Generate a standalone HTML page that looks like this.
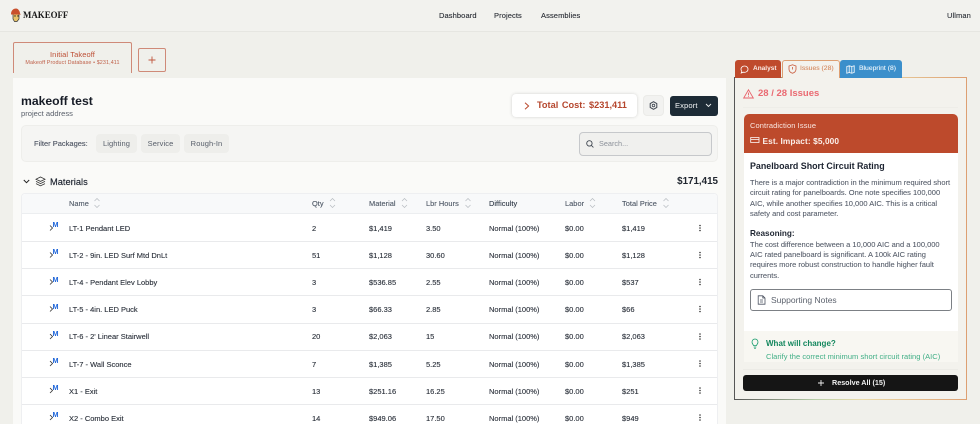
<!DOCTYPE html>
<html><head><meta charset="utf-8"><style>
*{box-sizing:border-box;margin:0;padding:0}
html,body{width:980px;height:424px;overflow:hidden}
body{background:#f0f0eb;font-family:"Liberation Sans",sans-serif;position:relative;color:#111827}
.a{position:absolute;white-space:nowrap}
.t{position:absolute;white-space:nowrap;line-height:10px;font-size:7.5px;color:#2a303a;-webkit-text-stroke:.12px #2a303a}
.h{position:absolute;white-space:nowrap;line-height:10px;font-size:7.4px;color:#4b5563;letter-spacing:.04px;top:199px;-webkit-text-stroke:.1px #4b5563}
.line{position:absolute;left:22px;width:695px;height:1px;background:#e9eaec}
.m{position:absolute;left:52.500px;font-size:7.200px;line-height:8px;font-weight:bold;color:#1d64d8}
svg{position:absolute;overflow:visible}
.p{position:absolute;left:750px;white-space:nowrap;font-size:7.5px;line-height:10px;color:#555c69;-webkit-text-stroke:.08px #555c69}
.n{position:absolute;top:11px;font-size:7.500px;line-height:10px;color:#2b2f36;letter-spacing:.1px;-webkit-text-stroke:.12px #2b2f36}
.c{position:absolute;top:134px;height:19px;background:#eeeeeb;border-radius:4px;text-align:center;font-size:7.500px;line-height:20px;color:#565d69;letter-spacing:.1px}
</style></head><body>
<!-- header -->
<div class="a" style="left:0;top:0;width:980px;height:32px;background:#f2f2ee;border-bottom:1px solid #e6e6e1"></div>
<svg style="left:10px;top:8px" width="12" height="14" viewBox="0 0 12 14"><path d="M3 6h6v5l-2 2.500H4.500L3 11z" fill="#e9c46a" stroke="#333" stroke-width=".7"/><path d="M1 6c0-4 3-5.500 5-5.500S10 3 10 5.500L11 6.500H1z" fill="#c9502c"/><circle cx="5" cy="8" r=".7" fill="#222"/><circle cx="8" cy="8" r=".7" fill="#222"/></svg>
<div class="a" style="left:23px;top:9px;font:bold 8.900px/12px 'Liberation Serif',serif;color:#1a1a1a">MAKEOFF</div>
<div class="n" style="left:439px">Dashboard</div>
<div class="n" style="left:494px">Projects</div>
<div class="n" style="left:541px">Assemblies</div>
<div class="n" style="left:947px">Ullman</div>
<!-- scenario tabs -->
<div class="a" style="left:13px;top:42px;width:119px;height:31px;border:1px solid #cf8a78;border-bottom:0;border-radius:2px 2px 0 0"></div>
<div class="a" style="left:13px;top:50px;width:119px;text-align:center;font-size:7.500px;line-height:10px;color:#bd4f35;letter-spacing:.1px">Initial Takeoff</div>
<div class="a" style="left:13px;top:59px;width:119px;text-align:center;font-size:5.400px;line-height:9px;color:#bf5f48;letter-spacing:.1px">Makeoff Product Database • $231,411</div>
<div class="a" style="left:138px;top:48px;width:28px;height:24px;border:1px solid #cf8a78;border-radius:2px"></div>
<svg style="left:148px;top:56px" width="8" height="8" viewBox="0 0 8 8"><path d="M4 .5v7M.5 4h7" stroke="#c0563d" stroke-width=".9"/></svg>
<!-- main panel -->
<div class="a" style="left:13px;top:78px;width:713px;height:346px;background:#fafaf8"></div>
<div class="a" style="left:21px;top:94px;font-size:12.200px;line-height:15px;font-weight:bold;color:#161b26">makeoff test</div>
<div class="a" style="left:21px;top:109px;font-size:7.600px;line-height:10px;color:#5a606b">project address</div>
<!-- actions -->
<div class="a" style="left:512px;top:94px;width:125px;height:23px;background:#fff;border-radius:4px;box-shadow:0 0 3px rgba(0,0,0,.16)"></div>
<svg style="left:524px;top:102px" width="6" height="8" viewBox="0 0 6 8"><path d="M1 .8 4.600 4 1 7.200" fill="none" stroke="#b9472c" stroke-width="1"/></svg>
<div class="a" style="left:537px;top:100px;font-size:9.200px;line-height:11px;font-weight:bold;color:#b5462d;word-spacing:1.100px">Total Cost: $231,411</div>
<div class="a" style="left:643px;top:95px;width:21px;height:21px;background:#f2f2f0;border:1px solid #ebebe8;border-radius:4px"></div>
<svg style="left:649px;top:101px" width="9" height="9" viewBox="0 0 9 9"><path d="M4.500.7 7.800 2.600V6.400L4.500 8.300 1.200 6.400V2.600Z" fill="none" stroke="#3f4650" stroke-width="1"/><circle cx="4.500" cy="4.500" r="1.300" fill="none" stroke="#3f4650" stroke-width=".8"/></svg>
<div class="a" style="left:670px;top:96px;width:48px;height:20px;background:#1d2b36;border-radius:3px"></div>
<div class="a" style="left:675px;top:101px;font-size:7.600px;line-height:10px;color:#f2f4f5;letter-spacing:.1px">Export</div>
<svg style="left:705px;top:103px" width="7" height="5" viewBox="0 0 7 5"><path d="M1 1 3.500 3.500 6 1" fill="none" stroke="#eef0f1" stroke-width=".9"/></svg>
<!-- filter bar -->
<div class="a" style="left:21px;top:125px;width:697px;height:37px;background:#f5f5f3;border:1px solid #eeeeeb;border-radius:5px"></div>
<div class="a" style="left:34px;top:139px;font-size:7.500px;line-height:10px;color:#4b5260;-webkit-text-stroke:.12px #4b5260">Filter Packages:</div>
<div class="c" style="left:96px;width:41px">Lighting</div>
<div class="c" style="left:141px;width:39px">Service</div>
<div class="c" style="left:184px;width:45px">Rough-In</div>
<div class="a" style="left:579px;top:132px;width:133px;height:24px;background:#f0f0ee;border:1px solid #c6c8cb;border-radius:4px"></div>
<svg style="left:586px;top:140px" width="8" height="8" viewBox="0 0 8 8"><circle cx="3.400" cy="3.400" r="2.700" fill="none" stroke="#3f4650" stroke-width=".9"/><path d="m5.400 5.400 2 2" stroke="#3f4650" stroke-width=".9"/></svg>
<div class="a" style="left:599px;top:139px;font-size:7.300px;line-height:10px;color:#8b9099">Search...</div>
<!-- materials -->
<svg style="left:23px;top:179px" width="7" height="5" viewBox="0 0 7 5"><path d="M.8 1 3.500 3.700 6.200 1" fill="none" stroke="#222" stroke-width="1"/></svg>
<svg style="left:35px;top:176px" width="11" height="11" viewBox="0 0 11 11" fill="none" stroke="#333" stroke-width=".8"><path d="M5.500 1 10 3.200 5.500 5.400 1 3.200Z"/><path d="M1 5.400 5.500 7.600 10 5.400"/><path d="M1 7.600 5.500 9.800 10 7.600"/></svg>
<div class="a" style="left:50px;top:176px;font-size:9.300px;line-height:12px;color:#1a202c;-webkit-text-stroke:.15px #1a202c">Materials</div>
<div class="a" style="right:262px;top:176px;font-size:9.800px;line-height:12px;font-weight:bold;color:#20262f">$171,415</div>
<!-- table -->
<div class="a" style="left:21px;top:193px;width:697px;height:240px;background:#fff;border:1px solid #eeeff1;border-radius:4px"></div>
<div class="a" style="left:22px;top:194px;width:695px;height:20px;background:#f8f9fa;border-bottom:1px solid #eceef0;border-radius:4px 4px 0 0"></div>
<div class="h" style="left:69px">Name</div><div class="h" style="left:312px">Qty</div><div class="h" style="left:369px">Material</div><div class="h" style="left:426px">Lbr Hours</div><div class="h" style="left:489px;color:#1f2937">Difficulty</div><div class="h" style="left:565px">Labor</div><div class="h" style="left:622px">Total Price</div>
<svg style="left:0;top:0" width="980" height="424" fill="none" stroke="#b6bac0" stroke-width=".7">
<path d="M94.500 201 97 198.500 99.500 201M94.500 205 97 207.500 99.500 205"/>
<path d="M330 201 332.500 198.500 335 201M330 205 332.500 207.500 335 205"/>
<path d="M402 201 404.500 198.500 407 201M402 205 404.500 207.500 407 205"/>
<path d="M465.500 201 468 198.500 470.500 201M465.500 205 468 207.500 470.500 205"/>
<path d="M590 201 592.500 198.500 595 201M590 205 592.500 207.500 595 205"/>
<path d="M663.500 201 666 198.500 668.500 201M663.500 205 666 207.500 668.500 205"/>
</svg>
<div class="line" style="top:241px"></div><div class="line" style="top:268px"></div><div class="line" style="top:295px"></div><div class="line" style="top:323px"></div><div class="line" style="top:350px"></div><div class="line" style="top:377px"></div><div class="line" style="top:404px"></div>
<!-- rows -->
<div class="t" style="left:69px;top:224px">LT-1 Pendant LED</div><div class="t" style="left:312px;top:224px">2</div><div class="t" style="left:369px;top:224px">$1,419</div><div class="t" style="left:426px;top:224px">3.50</div><div class="t" style="left:489px;top:224px">Normal (100%)</div><div class="t" style="left:565px;top:224px">$0.00</div><div class="t" style="left:622px;top:224px">$1,419</div>
<div class="t" style="left:69px;top:251px">LT-2 - 9in. LED Surf Mtd DnLt</div><div class="t" style="left:312px;top:251px">51</div><div class="t" style="left:369px;top:251px">$1,128</div><div class="t" style="left:426px;top:251px">30.60</div><div class="t" style="left:489px;top:251px">Normal (100%)</div><div class="t" style="left:565px;top:251px">$0.00</div><div class="t" style="left:622px;top:251px">$1,128</div>
<div class="t" style="left:69px;top:278px">LT-4 - Pendant Elev Lobby</div><div class="t" style="left:312px;top:278px">3</div><div class="t" style="left:369px;top:278px">$536.85</div><div class="t" style="left:426px;top:278px">2.55</div><div class="t" style="left:489px;top:278px">Normal (100%)</div><div class="t" style="left:565px;top:278px">$0.00</div><div class="t" style="left:622px;top:278px">$537</div>
<div class="t" style="left:69px;top:305px">LT-5 - 4in. LED Puck</div><div class="t" style="left:312px;top:305px">3</div><div class="t" style="left:369px;top:305px">$66.33</div><div class="t" style="left:426px;top:305px">2.85</div><div class="t" style="left:489px;top:305px">Normal (100%)</div><div class="t" style="left:565px;top:305px">$0.00</div><div class="t" style="left:622px;top:305px">$66</div>
<div class="t" style="left:69px;top:332px">LT-6 - 2' Linear Stairwell</div><div class="t" style="left:312px;top:332px">20</div><div class="t" style="left:369px;top:332px">$2,063</div><div class="t" style="left:426px;top:332px">15</div><div class="t" style="left:489px;top:332px">Normal (100%)</div><div class="t" style="left:565px;top:332px">$0.00</div><div class="t" style="left:622px;top:332px">$2,063</div>
<div class="t" style="left:69px;top:360px">LT-7 - Wall Sconce</div><div class="t" style="left:312px;top:360px">7</div><div class="t" style="left:369px;top:360px">$1,385</div><div class="t" style="left:426px;top:360px">5.25</div><div class="t" style="left:489px;top:360px">Normal (100%)</div><div class="t" style="left:565px;top:360px">$0.00</div><div class="t" style="left:622px;top:360px">$1,385</div>
<div class="t" style="left:69px;top:387px">X1 - Exit</div><div class="t" style="left:312px;top:387px">13</div><div class="t" style="left:369px;top:387px">$251.16</div><div class="t" style="left:426px;top:387px">16.25</div><div class="t" style="left:489px;top:387px">Normal (100%)</div><div class="t" style="left:565px;top:387px">$0.00</div><div class="t" style="left:622px;top:387px">$251</div>
<div class="t" style="left:69px;top:414px">X2 - Combo Exit</div><div class="t" style="left:312px;top:414px">14</div><div class="t" style="left:369px;top:414px">$949.06</div><div class="t" style="left:426px;top:414px">17.50</div><div class="t" style="left:489px;top:414px">Normal (100%)</div><div class="t" style="left:565px;top:414px">$0.00</div><div class="t" style="left:622px;top:414px">$949</div>
<!-- M badges -->
<div class="m" style="top:221px">M</div>
<div class="m" style="top:248px">M</div>
<div class="m" style="top:276px">M</div>
<div class="m" style="top:303px">M</div>
<div class="m" style="top:330px">M</div>
<div class="m" style="top:357px">M</div>
<div class="m" style="top:384px">M</div>
<div class="m" style="top:411px">M</div>
<svg style="left:0;top:0" width="980" height="424" fill="none" stroke="#333" stroke-width=".8">
<path d="M50 225.500 52.500 228 50 230.500M50 252.500 52.500 255 50 257.500M50 279.500 52.500 282 50 284.500M50 306.500 52.500 309 50 311.500M50 334 52.500 336.500 50 339M50 361 52.500 363.500 50 366M50 388 52.500 390.500 50 393M50 415 52.500 417.500 50 420"/>
<g fill="#333" stroke="none">
<circle cx="700" cy="225.500" r=".8"/><circle cx="700" cy="228" r=".8"/><circle cx="700" cy="230.500" r=".8"/>
<circle cx="700" cy="252.500" r=".8"/><circle cx="700" cy="255" r=".8"/><circle cx="700" cy="257.500" r=".8"/>
<circle cx="700" cy="279.500" r=".8"/><circle cx="700" cy="282" r=".8"/><circle cx="700" cy="284.500" r=".8"/>
<circle cx="700" cy="306.500" r=".8"/><circle cx="700" cy="309" r=".8"/><circle cx="700" cy="311.500" r=".8"/>
<circle cx="700" cy="334" r=".8"/><circle cx="700" cy="336.500" r=".8"/><circle cx="700" cy="339" r=".8"/>
<circle cx="700" cy="361" r=".8"/><circle cx="700" cy="363.500" r=".8"/><circle cx="700" cy="366" r=".8"/>
<circle cx="700" cy="388" r=".8"/><circle cx="700" cy="390.500" r=".8"/><circle cx="700" cy="393" r=".8"/>
<circle cx="700" cy="415" r=".8"/><circle cx="700" cy="417.500" r=".8"/><circle cx="700" cy="420" r=".8"/>
</g></svg>
<!-- right panel -->
<div class="a" style="left:734px;top:77px;width:233px;height:323px;background:#f3f2ed;border:1px solid;border-image:linear-gradient(90deg,#555,#b8cfa8 35%,#ecdca8 55%,#dd9f72 100%) 1"></div>
<div class="a" style="left:735px;top:60px;width:46px;height:18px;background:#bf4a2c;border-radius:3px 3px 0 0"></div>
<svg style="left:740px;top:65px" width="9" height="9" viewBox="0 0 9 9"><path d="M4.500 1C2.500 1 1 2.400 1 4.200c0 .8.300 1.500.8 2L1.200 8l2-.8c2.800.6 4.800-1 4.800-3C8 2.400 6.500 1 4.500 1Z" fill="none" stroke="#fff" stroke-width=".8"/></svg>
<div class="a" style="left:753px;top:64px;font-size:6.500px;line-height:10px;font-weight:bold;color:#fbeee9">Analyst</div>
<div class="a" style="left:782px;top:60px;width:58px;height:18px;background:#f3f2ed;border:1px solid #dd9f72;border-bottom:0;border-radius:3px 3px 0 0"></div>
<svg style="left:788px;top:64px" width="9" height="10" viewBox="0 0 9 10"><path d="M4.500.8 8 2v3.200C8 7.300 6.300 8.600 4.500 9.300 2.700 8.600 1 7.300 1 5.200V2Z" fill="none" stroke="#c9583a" stroke-width=".8"/><path d="M4.500 3v2.500" stroke="#c9583a" stroke-width=".8"/></svg>
<div class="a" style="left:800px;top:64px;font-size:6.800px;line-height:10px;color:#d58a60;-webkit-text-stroke:.1px #d58a60">Issues (28)</div>
<div class="a" style="left:840px;top:60px;width:62px;height:18px;background:#3b8fcb;border-radius:3px 3px 0 0"></div>
<svg style="left:846px;top:65px" width="9" height="9" viewBox="0 0 9 9"><path d="M.8 1.500 3.200.8 5.800 1.500 8.200.8V7.500L5.800 8.200 3.200 7.500.8 8.200ZM3.200.8V7.500M5.800 1.500V8.200" fill="none" stroke="#fff" stroke-width=".8"/></svg>
<div class="a" style="left:859px;top:64px;font-size:6.800px;line-height:10px;color:#eef7fc;-webkit-text-stroke:.1px #eef7fc">Blueprint (8)</div>
<svg style="left:743px;top:89px" width="11" height="10" viewBox="0 0 11 10"><path d="M5.500.8 10.300 9H.7ZM5.500 3.600v2.800M5.500 7.300v.7" fill="none" stroke="#e8616a" stroke-width=".9"/></svg>
<div class="a" style="left:758px;top:88px;font-size:9.500px;line-height:12px;font-weight:bold;color:#ea6a72">28 / 28 Issues</div>
<div class="a" style="left:743px;top:107px;width:215px;height:1px;background:#eeede8"></div>
<!-- issue card -->
<div class="a" style="left:744px;top:114px;width:214px;height:248px;background:#fff;border-radius:5px 5px 0 0"></div>
<div class="a" style="left:744px;top:114px;width:214px;height:39px;background:#bd4a2c;border-radius:5px 5px 0 0"></div>
<div class="a" style="left:750px;top:121px;font-size:7.500px;line-height:10px;color:#fae8e2;letter-spacing:.1px">Contradiction Issue</div>
<svg style="left:750px;top:136px" width="10" height="9" viewBox="0 0 10 9"><path d="M.7 1.500h8.300v5H.7ZM.7 3.500h8.300" fill="none" stroke="#fff" stroke-width=".8"/></svg>
<div class="a" style="left:762.500px;top:136px;font-size:8.300px;line-height:10px;font-weight:bold;color:#fbefea;letter-spacing:.1px">Est. Impact: $5,000</div>
<div class="a" style="left:750px;top:160px;font-size:8.900px;line-height:12px;font-weight:bold;color:#1c2330">Panelboard Short Circuit Rating</div>
<div class="p" style="top:178px">There is a major contradiction in the minimum required short</div>
<div class="p" style="top:188px">circuit rating for panelboards. One note specifies 100,000</div>
<div class="p" style="top:199px">AIC, while another specifies 10,000 AIC. This is a critical</div>
<div class="p" style="top:209px">safety and cost parameter.</div>
<div class="a" style="left:750px;top:228px;font-size:8.200px;line-height:11px;font-weight:bold;color:#1f2632">Reasoning:</div>
<div class="p" style="top:240px">The cost difference between a 10,000 AIC and a 100,000</div>
<div class="p" style="top:250px">AIC rated panelboard is significant. A 100k AIC rating</div>
<div class="p" style="top:260px">requires more robust construction to handle higher fault</div>
<div class="p" style="top:271px">currents.</div>
<div class="a" style="left:750px;top:289px;width:202px;height:22px;background:#fff;border:1px solid #7c8085;border-bottom-width:1.500px;border-radius:3px"></div>
<svg style="left:757px;top:295px" width="9" height="10" viewBox="0 0 9 10"><path d="M1.200.8H5.800L8 3V9.200H1.200ZM5.800.8V3H8M3 5h3M3 7h3" fill="none" stroke="#4b5260" stroke-width=".8"/></svg>
<div class="a" style="left:771px;top:295px;font-size:8.500px;line-height:10px;color:#5d636e">Supporting Notes</div>
<div class="a" style="left:744px;top:331px;width:214px;height:31px;background:#f8f7f2"></div>
<svg style="left:751px;top:338px" width="8" height="11" viewBox="0 0 8 11"><path d="M2.500 7.500C2.300 6.500 1 5.800 1 4a3 3 0 0 1 6 0c0 1.800-1.300 2.500-1.500 3.500ZM2.700 9h2.600M3.200 10.300h1.600" fill="none" stroke="#169c6c" stroke-width=".8"/></svg>
<div class="a" style="left:766px;top:339px;font-size:8px;line-height:10px;font-weight:bold;color:#14875e">What will change?</div>
<div class="a" style="left:766px;top:352px;font-size:7.500px;line-height:10px;color:#3fae85;letter-spacing:.04px">Clarify the correct minimum short circuit rating (AIC)</div>
<div class="a" style="left:743px;top:369px;width:215px;height:1px;background:#ecebe6"></div>
<div class="a" style="left:743px;top:375px;width:215px;height:16px;background:#151515;border-radius:3px"></div>
<svg style="left:817px;top:379px" width="8" height="8" viewBox="0 0 8 8"><path d="M4 1v6M1 4h6" stroke="#eee" stroke-width=".9"/></svg>
<div class="a" style="left:832px;top:378px;font-size:7.200px;line-height:10px;font-weight:bold;color:#f1f1f1">Resolve All (15)</div>
</body></html>
